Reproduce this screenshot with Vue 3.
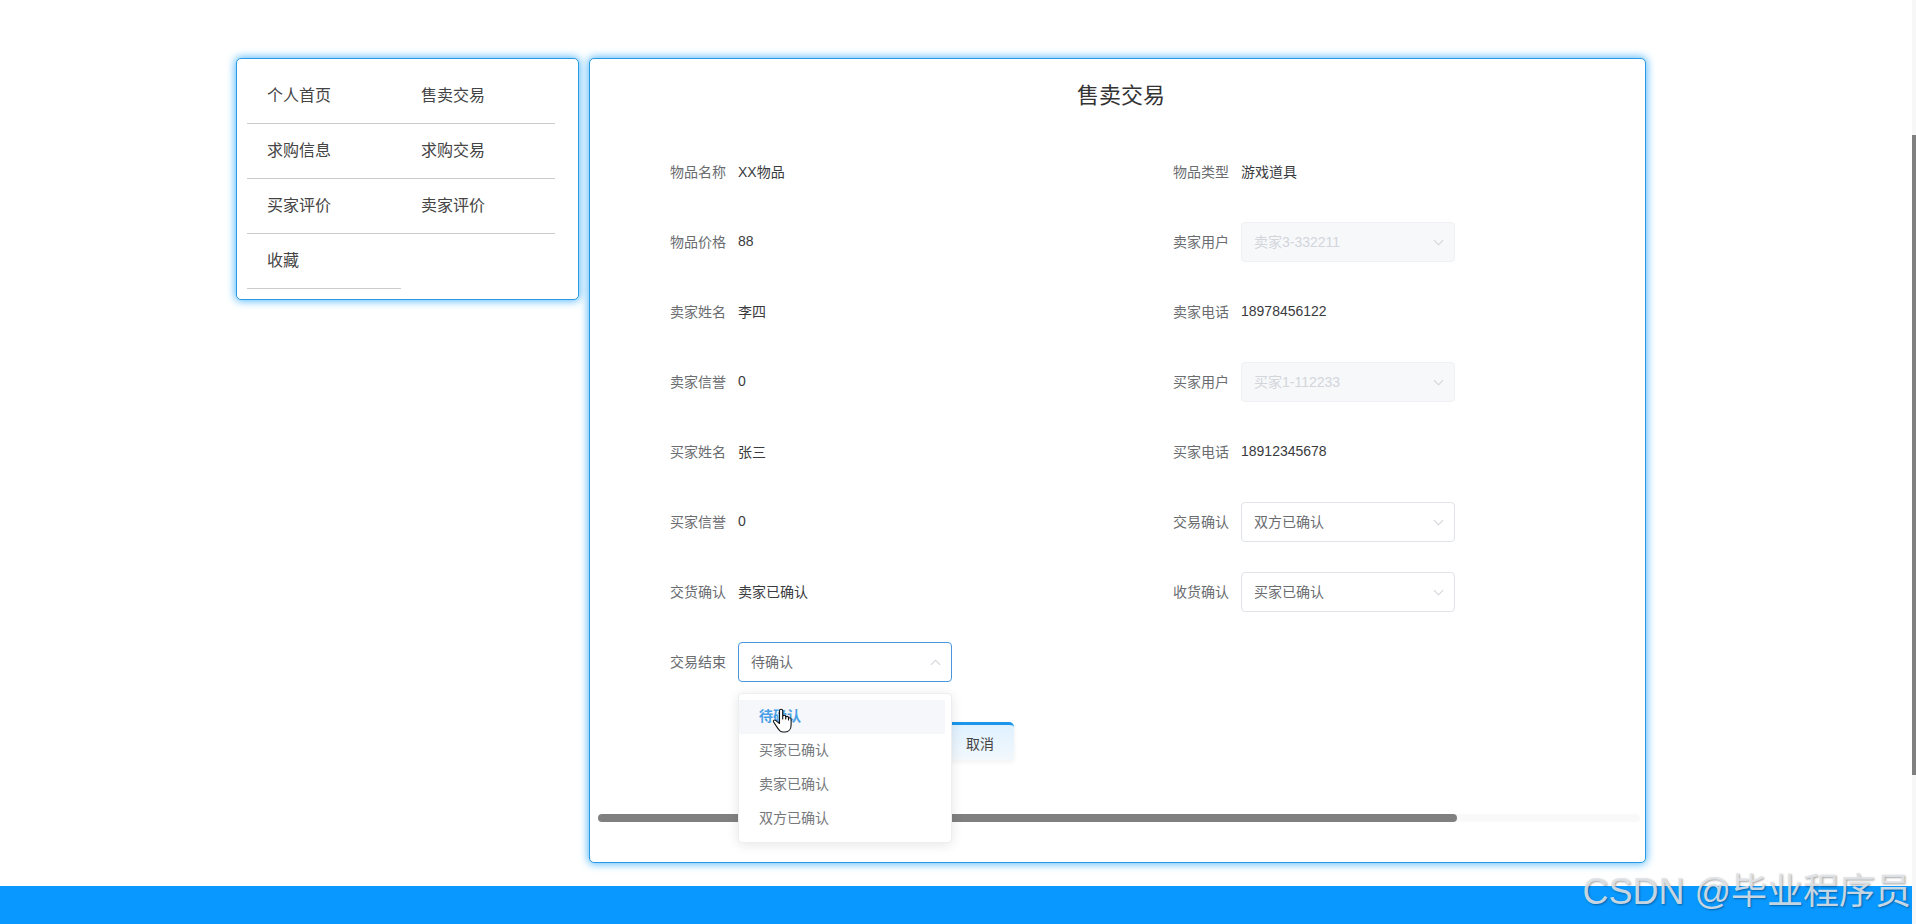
<script setup>
const menu = ['个人首页', '售卖交易', '求购信息', '求购交易', '买家评价', '卖家评价', '收藏']
const fields = [
  { label: '物品名称', value: 'XX物品' },
  { label: '物品类型', value: '游戏道具' },
  { label: '物品价格', value: '88' },
  { label: '卖家用户', select: '卖家3-332211', disabled: true },
  { label: '卖家姓名', value: '李四' },
  { label: '卖家电话', value: '18978456122' },
  { label: '卖家信誉', value: '0' },
  { label: '买家用户', select: '买家1-112233', disabled: true },
  { label: '买家姓名', value: '张三' },
  { label: '买家电话', value: '18912345678' },
  { label: '买家信誉', value: '0' },
  { label: '交易确认', select: '双方已确认' },
  { label: '交货确认', value: '卖家已确认' },
  { label: '收货确认', select: '买家已确认' },
  { label: '交易结束', select: '待确认', open: true }
]
const options = ['待确认', '买家已确认', '卖家已确认', '双方已确认']
</script>

<template>
  <div class="page">
    <div class="main">
      <div class="content">
        <nav class="card side">
          <a v-for="m in menu" :key="m" class="side-item">{{ m }}</a>
        </nav>
        <section class="card panel">
          <h2 class="title">售卖交易</h2>
          <div class="form">
            <div v-for="f in fields" :key="f.label" class="field">
              <span class="label">{{ f.label }}</span>
              <span v-if="f.value" class="value">{{ f.value }}</span>
              <div v-else class="select" :class="{ disabled: f.disabled, open: f.open }">
                <span class="select-text">{{ f.select }}</span>
                <svg class="chev" viewBox="0 0 12 7" width="11" height="7">
                  <path :d="f.open ? 'M1 6l5-5 5 5' : 'M1 1l5 5 5-5'" fill="none" stroke="#cfd2d8" stroke-width="1.1" />
                </svg>
                <div v-if="f.open" class="dropdown">
                  <div
                    v-for="(o, i) in options"
                    :key="o"
                    class="option"
                    :class="{ active: i === 0 }"
                  >{{ o }}</div>
                </div>
              </div>
            </div>
          </div>
          <div class="actions">
            <button class="cancel" type="button">取消</button>
          </div>
          <div class="hbar"><div class="hthumb"></div></div>
          <svg class="cursor" viewBox="0 0 20 25" width="20" height="25">
            <path
              d="M7.5 15.5V2.8a1.6 1.6 0 0 1 3.2 0V11V8.8a1.5 1.5 0 0 1 3 0V11V9.8a1.4 1.4 0 0 1 2.8 0V12v-1a1.3 1.3 0 0 1 2.6 0V17c0 4-2.4 7-6 7H11c-2.5 0-3.8-1.3-5-3.4L1.6 14c-.7-1.2.6-2.6 2-1.6l3.9 3.1z"
              fill="#fff"
              stroke="#111"
              stroke-width="1.1"
              stroke-linejoin="round"
            />
          </svg>
        </section>
      </div>
      <footer class="footer"></footer>
    </div>
    <div class="vbar"><div class="vthumb"></div></div>
    <div class="watermark">CSDN @毕业程序员</div>
  </div>
</template>

<style>
html, body { margin: 0; overflow: hidden; background: #fff; }
</style>

<style scoped>
.page {
  position: relative;
  display: flex;
  height: 924px;
  font-family: "Liberation Sans", "Noto Sans CJK SC", sans-serif;
  color: #333;
  overflow: hidden;
}
.main {
  flex: 1;
  min-width: 0;
  display: flex;
  flex-direction: column;
}
.content {
  flex: 1;
  display: flex;
  align-items: flex-start;
  gap: 10px;
  padding: 58px 0 0 236px;
}
.footer {
  height: 38px;
  background: #0898ff;
}
.vbar {
  width: 4px;
  background: #f7f7f7;
}
.vthumb {
  margin-top: 135px;
  height: 640px;
  background: #808080;
}
.card {
  box-sizing: border-box;
  background: #fff;
  border: 1px solid #2a9be2;
  border-radius: 5px;
  box-shadow: 0 0 8px 1px #55b8ff;
}
.side {
  width: 343px;
  height: 242px;
  padding: 10px 0 0 10px;
  display: grid;
  grid-template-columns: 154px 154px;
  grid-auto-rows: 55px;
}
.side-item {
  box-sizing: border-box;
  padding-left: 20px;
  line-height: 53px;
  font-size: 16px;
  color: #444;
  border-bottom: 1px solid #ccc;
}
.panel {
  position: relative;
  width: 1057px;
  height: 805px;
}
.title {
  box-sizing: border-box;
  margin: 0 0 19px;
  height: 74px;
  padding-left: 7px;
  line-height: 74px;
  text-align: center;
  font-size: 22px;
  font-weight: 400;
  color: #333;
}
.form {
  display: grid;
  grid-template-columns: 503px 503px;
  grid-auto-rows: 40px;
  row-gap: 30px;
  padding-left: 68px;
}
.field {
  display: flex;
  align-items: center;
  font-size: 14px;
}
.label {
  width: 68px;
  padding: 0 12px 2px 0;
  text-align: right;
  color: #6a6c70;
  white-space: nowrap;
}
.value {
  padding-bottom: 2px;
  color: #3a3b3e;
}
.select {
  position: relative;
  box-sizing: border-box;
  width: 214px;
  height: 40px;
  padding: 0 10px 0 12px;
  display: flex;
  align-items: center;
  justify-content: space-between;
  background: #fff;
  border: 1px solid #e0e3e8;
  border-radius: 4px;
  color: #6a6c70;
}
.select-text {
  padding-bottom: 2px;
}
.select.disabled {
  background: #f7f8fa;
  border-color: #eff0f3;
  color: #d2d5da;
}
.select.open {
  border-color: #4a96dc;
}
.dropdown {
  position: absolute;
  z-index: 2;
  top: 50px;
  left: -1px;
  box-sizing: border-box;
  width: 214px;
  padding: 6px 6px 6px 0;
  background: #fff;
  border: 1px solid #eceef2;
  border-radius: 4px;
  box-shadow: 0 2px 12px rgba(0, 0, 0, 0.1);
}
.option {
  height: 34px;
  line-height: 33px;
  padding-left: 20px;
  color: #76787c;
}
.option.active {
  background: #f5f7fa;
  color: #4aa0e6;
  font-weight: 700;
}
.actions {
  margin-top: 40px;
  padding-left: 356px;
}
.cancel {
  box-sizing: border-box;
  width: 68px;
  height: 38px;
  padding: 0;
  border: 0;
  border-top: 3px solid #1b96ea;
  border-radius: 5px 5px 0 0;
  background: linear-gradient(#dff1ff, #f3f8fc);
  box-shadow: 0 2px 5px rgba(0, 0, 0, 0.06);
  font: inherit;
  font-size: 14px;
  color: #444;
}
.hbar {
  margin: 54px 5px 0 8px;
  height: 8px;
  background: #f9f9f9;
  border-radius: 4px;
}
.hthumb {
  width: 859px;
  height: 8px;
  background: #808080;
  border-radius: 4px;
}
.cursor {
  position: absolute;
  z-index: 3;
  left: 182px;
  top: 649px;
}
.watermark {
  position: absolute;
  right: 5px;
  top: 869px;
  font-size: 36px;
  line-height: 46px;
  white-space: nowrap;
  color: rgba(225, 228, 232, 0.88);
  text-shadow: 1px 1px 2px rgba(0, 0, 0, 0.35);
}
</style>
